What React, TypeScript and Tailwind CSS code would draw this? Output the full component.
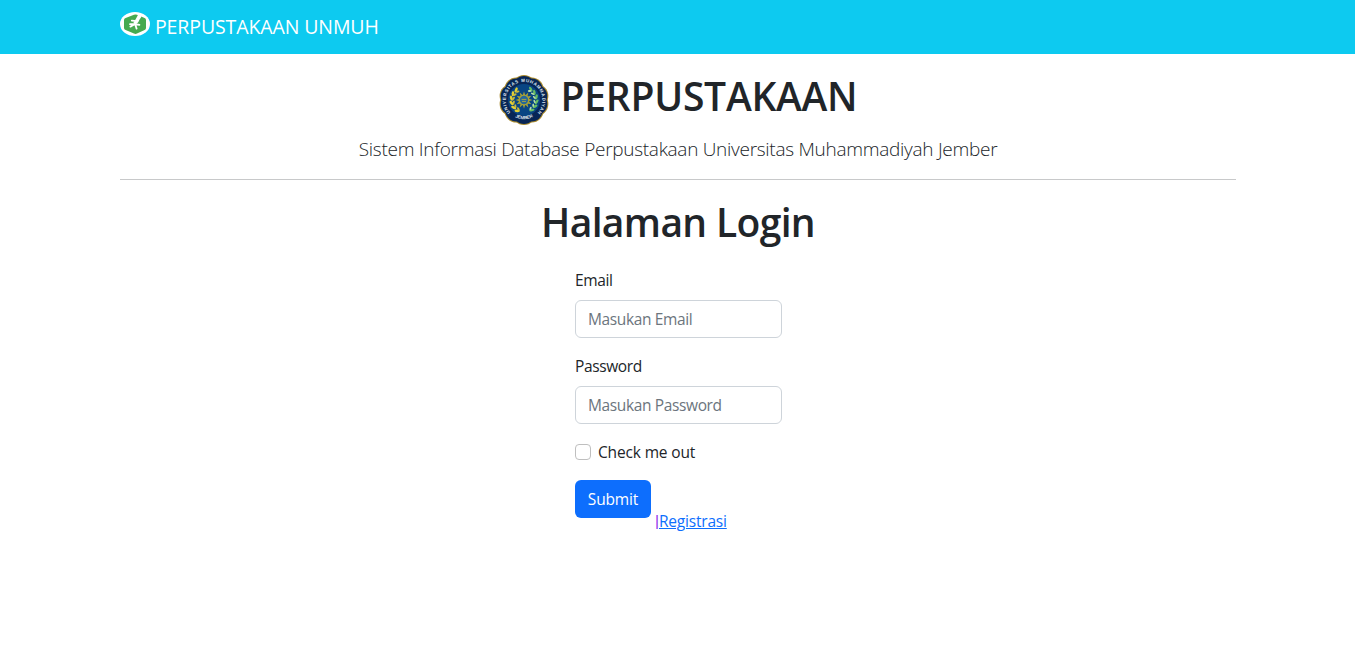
import React from 'react';

function BrandMark() {
  return (
    <svg width="30" height="24" viewBox="0 0 30 24" className="block shrink-0">
      <ellipse cx="15" cy="12" rx="15" ry="12" fill="#fff" />
      <path d="M14 2.8 Q15.5 2 17 2.8 L24.6 5.9 Q26 6.5 26 8 V16 Q26 17.4 24.6 18.1 L17 21.6 Q15.5 22.2 14 21.6 L5.6 18.1 Q4 17.4 4 16 V8 Q4 6.5 5.6 5.9 Z" fill="#46aa50" />
      <path d="M18.2 2.6 L21.6 4.4 L19.6 7.4 L18 10.4 L15.4 12.2 L13.4 10.8 L15.8 7 Z" fill="#fff" />
      <path d="M11.8 8.6 L14.4 8.8 M17.6 9 L14.6 12.2 L10.4 14.6 M10 12.2 L14.6 12 L19.4 12.8 M15.2 12.4 L16.6 16.6" fill="none" stroke="#fff" strokeWidth="1.8" strokeLinecap="round" strokeLinejoin="round" />
    </svg>
  );
}

const petals = Array.from({ length: 10 }, (_, i) => (i * 36 - 90) * (Math.PI / 180));
const rays = Array.from({ length: 12 }, (_, i) => i * 30);
const leaves = [-58, -36, -14, 8, 30, 52];

function Seal() {
  return (
    <svg width="50" height="50" viewBox="0 0 50 50" className="block shrink-0">
      <defs>
        <path id="arcTop" d="M11.4 37.5 A18.3 18.3 0 1 1 38.6 37.5" />
        <path id="arcBottom" d="M12 39.6 A20.8 20.8 0 0 0 38 39.6" />
      </defs>
      {petals.map((a, i) => (
        <circle key={i} cx={25 + 13 * Math.cos(a)} cy={25 + 13 * Math.sin(a)} r="12" fill="#a98a2e" />
      ))}
      {petals.map((a, i) => (
        <circle key={i} cx={25 + 13 * Math.cos(a)} cy={25 + 13 * Math.sin(a)} r="10.9" fill="#082656" />
      ))}
      <circle cx="25" cy="25" r="20" fill="#082656" />
      <circle cx="25" cy="25" r="16" fill="#084583" />
      <text fontSize="4.5" fontWeight="700" fill="#dce5f0" fontFamily="Liberation Sans, sans-serif">
        <textPath href="#arcTop" textLength="84" lengthAdjust="spacing">UNIVERSITAS MUHAMMADIYAH</textPath>
      </text>
      <text fontSize="4.6" fontWeight="700" fill="#dce5f0" textAnchor="middle" fontFamily="Liberation Sans, sans-serif">
        <textPath href="#arcBottom" startOffset="50%">JEMBER</textPath>
      </text>
      {leaves.map((a) => (
        <g key={a}>
          <ellipse cx="12.2" cy="25" rx="1.3" ry="2.7" fill="#e3cf35" transform={`rotate(${a} 25 25) rotate(-28 12.2 25)`} />
          <ellipse cx="14.4" cy="25" rx="1" ry="2" fill="#c9b83a" transform={`rotate(${a} 25 25) rotate(28 14.4 25)`} />
          <ellipse cx="37.8" cy="25" rx="1.3" ry="2.7" fill="#66bd64" transform={`rotate(${a} 25 25) rotate(28 37.8 25)`} />
          <ellipse cx="35.6" cy="25" rx="0.9" ry="1.8" fill="#b9dfa8" transform={`rotate(${a} 25 25) rotate(-28 35.6 25)`} />
        </g>
      ))}
      {rays.map((r) => (
        <path key={r} d="M23.7 20.5 L25 16.4 L26.3 20.5 Z" fill="#a8a236" transform={`rotate(${r} 25 25)`} />
      ))}
      <circle cx="25" cy="25" r="4.8" fill="#25689a" stroke="#a8a236" strokeWidth="1.3" />
      <path d="M22.6 24.4 H27.4 M23 26.4 H27" stroke="#b6aa35" strokeWidth=".9" />
    </svg>
  );
}

function Field({ label, type }: { label: string; type: string }) {
  return (
    <div className="mb-4 tracking-[-0.37px]">
      <label htmlFor={type} className="mb-2 block h-6 leading-[25px]">{label}</label>
      <input
        id={type}
        type={type}
        placeholder={`Masukan ${label}`}
        className="block h-[38px] w-full rounded-md border border-[#ced4da] bg-white px-3 py-1.5 placeholder:text-[#6c757d] placeholder:opacity-100"
      />
    </div>
  );
}

export default function App() {
  return (
    <div className="min-h-screen bg-white font-['Open_Sans','Noto_Sans',sans-serif] text-[15.5px] leading-6 tracking-[-0.15px] text-[#212529]">
      <nav className="h-[54px] bg-[#0dcaf0]">
        <div className="ml-[120px] flex w-[1116px] pt-3">
          <BrandMark />
          <span className="ml-[5px] text-[19.5px] leading-[30px] tracking-[-0.11px] whitespace-nowrap text-white">PERPUSTAKAAN UNMUH</span>
        </div>
      </nav>
      <main className="ml-[120px] w-[1116px]">
        <header className="flex h-[126px] flex-col items-center border-b border-[#c8c9ca] pt-[21px]">
          <div className="flex h-[50px]">
            <Seal />
            <h1 className="ml-3 text-[39px] leading-[42px] font-semibold tracking-[-0.25px] whitespace-nowrap">PERPUSTAKAAN</h1>
          </div>
          <p className="mt-[9px] text-[19px] leading-[31px] font-light tracking-[-0.28px] whitespace-nowrap">
            Sistem Informasi Database Perpustakaan Universitas Muhammadiyah Jember
          </p>
        </header>
        <h2 className="mt-[18px] text-center text-[39px] leading-[48px] font-semibold tracking-[-0.65px] whitespace-nowrap">Halaman Login</h2>
        <form className="mt-[22px] ml-[455px] w-[207px]" onSubmit={(e) => e.preventDefault()}>
          <Field label="Email" type="email" />
          <Field label="Password" type="password" />
          <label className="mb-4 flex h-6 items-center">
            <input type="checkbox" className="mr-[7px] size-4 appearance-none rounded-[4px] border border-[#bfbfbf] bg-white checked:bg-[#0d6efd]" />
            Check me out
          </label>
          <div className="flex">
            <button type="submit" className="h-[38px] w-[76px] rounded-md bg-[#0d6efd] text-white">Submit</button>
            <div className="mt-[29px] ml-1 flex tracking-[-0.2px]">
              <span className="w-1 font-['Liberation_Sans',sans-serif] text-[#9333ea]">|</span>
              <a href="#registrasi" className="text-[#0d6efd] underline">Registrasi</a>
            </div>
          </div>
        </form>
      </main>
    </div>
  );
}
